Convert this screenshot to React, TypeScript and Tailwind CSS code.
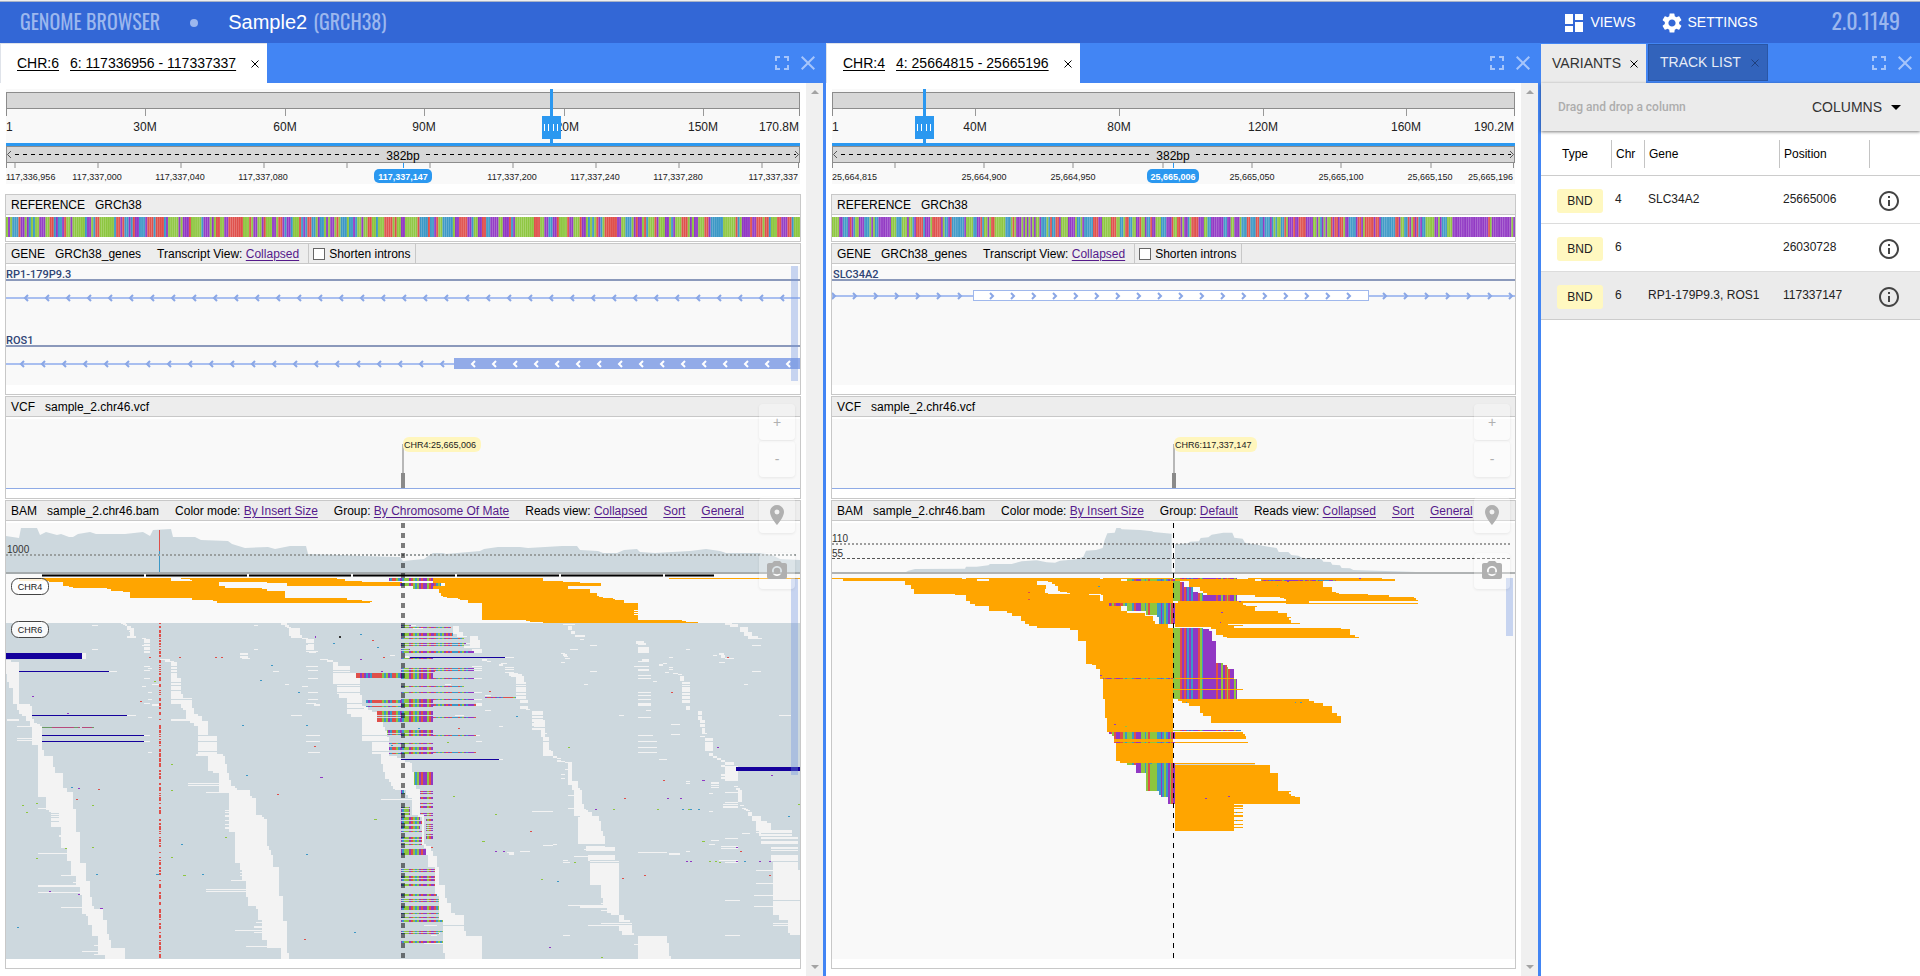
import React from "react";
import {
  MdArrowDropDown,
  MdCameraAlt,
  MdClose,
  MdDashboard,
  MdFullscreen,
  MdInfoOutline,
  MdPlace,
  MdSettings,
} from "react-icons/md";

const GREEN = "#8dc63f";
const RED = "#df4f4a";
const BLUE = "#3c98c6";
const PURPLE = "#9138c4";
const ORANGE = "#ffa500";
const NAVY = "#14009c";
const READ = "#cdd8de";
const GAP = "#f3f3f3";
const BASES: Record<string, string> = { g: GREEN, r: RED, b: BLUE, p: PURPLE };

/* ---------- geometry helpers ---------- */

type Frame = { x: number; w: number };
const LEFT: Frame = { x: 6, w: 794 };
const RIGHT: Frame = { x: 832, w: 683 };

const pct = (f: Frame, x: number) => `${((x - f.x) / f.w) * 100}%`;

function random(seed: number) {
  let s = seed;
  return () => {
    s = (s * 1664525 + 1013904223) % 4294967296;
    return s / 4294967296;
  };
}

const pairs = (s: string) =>
  s
    .trim()
    .split(/\s+/)
    .map((p) => p.split(",").map(Number));

/* A stepped band: each pair is an edge position and the row where it starts. */
function band(left: string, right: string, end: number) {
  const l = pairs(left);
  const r = pairs(right);
  let d = `M${l[0][0]} ${l[0][1]}`;
  r.forEach(([x, y]) => (d += `V${y}H${x}`));
  d += `V${end}H${l[l.length - 1][0]}`;
  for (let i = l.length - 1; i > 0; i--) d += `V${l[i][1]}H${l[i - 1][0]}`;
  return d + "Z";
}

const boxes = (s: string) =>
  pairs(s)
    .map(([x, y, w, h = 3]) => `M${x} ${y}h${w}v${h}h${-w}z`)
    .join("");

function Canvas({ frame, y, h, className, children, labels }: {
  frame: Frame; y: number; h: number; className: string;
  children: React.ReactNode; labels?: React.ReactNode;
}) {
  return (
    <svg className={`block w-full bg-[#f9f9f9] ${className}`}>
      <svg x="0" y="0" width="100%" height="100%" viewBox={`${frame.x} ${y} ${frame.w} ${h}`} preserveAspectRatio="none">
        {children}
      </svg>
      {labels}
    </svg>
  );
}

function Stripes({ id, start, code }: { id: string; start: number; code: string }) {
  const parts = code.split(" ").map((c) => [c[0], Number(c.slice(1))] as [string, number]);
  const total = parts.reduce((a, p) => a + p[1], 0);
  let x = 0;
  return (
    <pattern id={id} patternUnits="userSpaceOnUse" x={start} y="-400" width={total} height="3000">
      {parts.map(([c, w], i) => {
        const at = x;
        x += w;
        return <rect key={i} x={at} y="0" width={w} height="3000" fill={BASES[c]} />;
      })}
    </pattern>
  );
}

/* ---------- ruler ---------- */

type RulerData = {
  frame: Frame; handle: number; center: number;
  major: [number, string][]; end: string;
  minor: number[]; minorLabels: [number, string][];
  first: string; last: string; current: string; pill: number;
};

const LEFT_RULER: RulerData = {
  frame: LEFT, handle: 551, center: 403,
  major: [[145, "30M"], [285, "60M"], [424, "90M"], [564, "120M"], [703, "150M"]],
  end: "170.8M",
  minor: [15, 98, 181, 264, 347, 430, 513, 596, 679, 762],
  minorLabels: [[97, "117,337,000"], [180, "117,337,040"], [263, "117,337,080"], [512, "117,337,200"], [595, "117,337,240"], [678, "117,337,280"]],
  first: "117,336,956", last: "117,337,337", current: "117,337,147", pill: 58,
};

const RIGHT_RULER: RulerData = {
  frame: RIGHT, handle: 924, center: 1173,
  major: [[975, "40M"], [1119, "80M"], [1263, "120M"], [1406, "160M"]],
  end: "190.2M",
  minor: [895, 984, 1073, 1163, 1252, 1341, 1431],
  minorLabels: [[984, "25,664,900"], [1073, "25,664,950"], [1252, "25,665,050"], [1341, "25,665,100"], [1430, "25,665,150"]],
  first: "25,664,815", last: "25,665,196", current: "25,665,006", pill: 52,
};

function Ruler({ data }: { data: RulerData }) {
  const { frame: f } = data;
  const a = f.x;
  const b = f.x + f.w;
  const p = (x: number) => pct(f, x);
  return (
    <Canvas
      frame={f} y={89} h={95} className="h-[95px]"
      labels={
        <>
          <g fontSize="12" fill="#222">
            <text x="0" y="42">1</text>
            {data.major.map(([x, t]) => <text key={t} x={p(x)} y="42" textAnchor="middle">{t}</text>)}
            <text x={p(b - 1)} y="42" textAnchor="end">{data.end}</text>
          </g>
          <text x={p(data.center)} y="71" textAnchor="middle" fontSize="12" fill="#000">382bp</text>
          <g fontSize="9" fill="#222">
            <text x="0" y="91">{data.first}</text>
            {data.minorLabels.map(([x, t]) => <text key={t} x={p(x)} y="91" textAnchor="middle">{t}</text>)}
            <text x={p(b - 2)} y="91" textAnchor="end">{data.last}</text>
          </g>
          <svg x={p(data.center)} y="0" overflow="visible">
            <rect x={-data.pill / 2} y="80" width={data.pill} height="14" rx="5" fill="#2b98f0" />
            <text x="0" y="91" textAnchor="middle" fontSize="9" fontWeight="700" fill="#fff">{data.current}</text>
          </svg>
          <svg x={p(data.handle)} y="0" overflow="visible">
            <rect x="-1" y="0" width="3" height="54" fill="#2b98f0" />
            <rect x="-9" y="27" width="19" height="23" fill="#2b98f0" />
            {[-7, -3, 2, 6].map((x) => <rect key={x} x={x} y="35" width="1" height="7" fill="#fff" />)}
          </svg>
        </>
      }
    >
      <g shapeRendering="crispEdges">
        <rect x={a} y="92" width={f.w} height="17" fill="#8c8c8c" />
        <rect x={a + 1} y="93" width={f.w - 2} height="15" fill="#d7d7d7" />
        <rect x={a} y="109" width="1" height="7" fill="#8c8c8c" />
        <rect x={b - 1} y="109" width="1" height="7" fill="#8c8c8c" />
        {data.major.map(([x]) => <rect key={x} x={x} y="109" width="1" height="7" fill="#999" />)}
        <rect x={a} y="143" width={f.w} height="3" fill="#2b98f0" />
        <rect x={a} y="146" width={f.w} height="17" fill="#8c8c8c" />
        <rect x={a + 1} y="147" width={f.w - 2} height="15" fill="#d7d7d7" />
        <path d={`M${a + 9} 154.5H${data.center - 22}M${data.center + 23} 154.5H${b - 4}`} stroke="#000" strokeDasharray="4 4" />
        <rect x={a} y="163" width="1" height="5" fill="#8c8c8c" />
        <rect x={b - 2} y="163" width="1" height="5" fill="#8c8c8c" />
        {data.minor.map((x) => <rect key={x} x={x - 1} y="163" width="2" height="5" fill="#c4c4c4" />)}
        <rect x={data.center} y="163" width="1" height="5" fill="#2b98f0" />
      </g>
      <path d={`M${a + 5} 151L${a + 1.5} 154.5L${a + 5} 158M${b - 5} 151L${b - 1.5} 154.5L${b - 5} 158`} fill="none" stroke="#555" />
    </Canvas>
  );
}

/* ---------- reference sequence ---------- */

function Sequence({ frame, seed, runs }: { frame: Frame; seed: number; runs: [number, number][] }) {
  const rnd = random(seed);
  const n = 382;
  const step = frame.w / n;
  const keys = ["g", "g", "r", "b", "p", "p", "p", "g", "b", "r"];
  let cur = "g";
  const cells: React.ReactNode[] = [];
  for (let i = 0; i < n; i++) {
    if (rnd() > 0.3) cur = keys[Math.floor(rnd() * keys.length)];
    const purple = runs.some(([s, e]) => i >= s && i <= e);
    const c = purple ? "p" : cur;
    cells.push(<rect key={i} x={frame.x + i * step} y="217" width={step + 0.1} height="20" fill={BASES[c]} />);
  }
  return (
    <Canvas frame={frame} y={217} h={20} className="h-5">
      {cells}
      <path
        d={Array.from({ length: n }, (_, i) => `M${frame.x + (i + 0.85) * step} 217v20`).join("")}
        stroke="#fff" strokeOpacity="0.18" strokeWidth="0.6"
      />
    </Canvas>
  );
}

/* ---------- genes ---------- */

const chevrons = (from: number, to: number, y: number, dir: number) => {
  let d = "";
  for (let x = from; x <= to; x += 21) d += `M${x - dir * 2} ${y - 3}L${x + dir} ${y}L${x - dir * 2} ${y + 3}`;
  return d;
};

function LeftGenes() {
  return (
    <Canvas
      frame={LEFT} y={266} h={119} className="h-[119px]"
      labels={
        <g className="font-[Roboto,sans-serif]" fontSize="11" fontWeight="500" fill="#2f4475">
          <text x="0" y="12">RP1-179P9.3</text>
          <text x="0" y="78">ROS1</text>
        </g>
      }
    >
      <rect x="6" y="279" width="794" height="2" fill="#8b99bb" />
      <rect x="6" y="345" width="794" height="2" fill="#8b99bb" />
      <rect x="6" y="297" width="794" height="2" fill="#a9bff0" />
      <rect x="6" y="363" width="794" height="2" fill="#a9bff0" />
      <path d={chevrons(26, 790, 298, -1) + chevrons(22, 445, 364, -1)} fill="none" stroke="#8aa7e6" strokeWidth="2" />
      <rect x="454" y="358" width="346" height="11" fill="#92abe8" />
      <path d={chevrons(473, 795, 364, -1)} fill="none" stroke="#fff" strokeWidth="2" />
      <rect x="791" y="266" width="7" height="115" fill="#6f92e0" fillOpacity="0.36" />
    </Canvas>
  );
}

function RightGenes() {
  return (
    <Canvas
      frame={RIGHT} y={266} h={119} className="h-[119px]"
      labels={<text x="1" y="12" className="font-[Roboto,sans-serif]" fontSize="11" fontWeight="500" fill="#2f4475">SLC34A2</text>}
    >
      <rect x="832" y="279" width="683" height="2" fill="#8b99bb" />
      <rect x="832" y="295" width="683" height="2" fill="#a9bff0" />
      <path d={chevrons(834, 970, 296, 1) + chevrons(1385, 1515, 296, 1)} fill="none" stroke="#8aa7e6" strokeWidth="2" />
      <rect x="973.5" y="290.5" width="395" height="10" fill="#fff" stroke="#a0b8ec" />
      <path d={chevrons(992, 1355, 296, 1)} fill="none" stroke="#8aa7e6" strokeWidth="2" />
    </Canvas>
  );
}

/* ---------- variants ---------- */

function Vcf({ frame, at, label, width }: { frame: Frame; at: number; label: string; width: number }) {
  return (
    <Canvas
      frame={frame} y={419} h={70} className="h-[70px]"
      labels={
        <svg x={pct(frame, at)} y="0" overflow="visible">
          <rect x="0" y="25" width="2" height="40" fill="#b8b8b8" />
          <rect x="-1" y="54" width="4" height="15" fill="#8a8a8a" />
          <rect x="1" y="18" width={width} height="15" rx="6" fill="#fff6bd" />
          <text x="2" y="29" fontSize="9" fill="#222">{label}</text>
        </svg>
      }
    >
      <rect x={frame.x} y="488" width={frame.w} height="1" fill="#8fabe6" />
    </Canvas>
  );
}

/* ---------- alignments, chromosome 6 ---------- */

const COVERAGE_LEFT =
  "M6 572V536L19 538L21 528L37 528L40 535L46 532L57 535L61 534L69 537L73 537L78 534L90 532L96 534L125 534L143 532L150 536L153 530L171 529L173 537L195 537L201 540L228 541L232 544L245 548L268 547L275 549L290 546L306 546L308 554L340 555L362 556L400 557L403 561L424 559L428 556L433 553L443 553L446 554L480 551L484 549L498 547L520 547L528 548L562 546L577 546L580 550L598 551L603 553L617 553L624 550L637 549L640 552L655 553L690 551L706 549L720 551L726 553L760 553L772 555L780 559L800 560V572Z";

const A_BANDS = [
  band(
    "18,330 21,372 27,396 39,414 51,462 57,480 66,492 78,498 90,513 96,528 114,585 138,741 147,780 153,786 183,831 201,894 213,933 228,978 240,1010 246,1035 258,1092 264,1098 276,1125 294,1158 315,1212",
    "33,330 57,336 90,462 96,468 102,507 111,519 120,522 126,528 132,600 159,618 165,651 189,669 201,714 219,726 228,777 240,846 258,939 270,993 276,1041 282,1068 309,1076 321,1110 327,1152 333,1170 375,1194",
    1227,
  ),
  band(
    "480,327 495,330 513,336 543,462 549,474 558,480 570,513 582,519 594,528 624,618 639,663 657,669 687,726 705,846 720,939 726,960 738,993 744,1041 768,1068 774,1077 786,1110 801,1170 843,1194",
    "510,327 522,333 531,336 543,385 549,432 576,444 582,474 594,492 606,498 624,513 651,558 669,612 675,618 681,642 687,669 693,690 705,708 711,714 750,720 756,738 768,744 786,795 792,801 801,807 807,888 813,900 819,915 837,951 849,1038 861,1113 867,1209",
    1227,
  ),
  band(
    "999,336 1011,402 1017,432 1041,444 1053,492 1086,502 1116,573 1143,612",
    "1014,336 1050,348 1080,369 1086,435 1104,468 1116,480 1131,486 1149,516 1155,531 1161,543 1167,561",
    618,
  ),
].join("");

const A_GAPS = boxes(
  "363,219,15 369,222,12 375,225,6 381,228,12,9 390,234,12,30 381,237,9 387,243,6 381,258,27,6 426,264,12 432,267,18,12 426,285,24 432,282,18 432,291,18,9 432,303,18,6 " +
    "843,219,18,6 855,225,12,3 855,228,12 861,231,12 867,234,33,24 873,255,33,9 906,264,18 918,267,24,12 924,282,18 918,285,24,15 918,303,36,3 926,306,22,3 960,327,24 981,330,18,6 " +
    "246,309,12,18 327,363,24 381,495,27 432,555,18 432,573,18 276,225,18 276,297,18 762,225,12 762,297,12 720,309,24,6 720,318,24,6 726,324,24 738,312,6 " +
    "432,348,18 444,354,12 432,360,18 432,384,18 426,408,12 444,426,12 444,447,12 432,459,18 456,462,24,6 444,501,12 456,402,24 444,606,12 820,363,17 855,402,12 906,408,18 873,495,33 " +
    "918,348,36 924,360,30 924,384,30 924,426,30 924,447,30 918,459,30 942,462,18,6 918,555,42 918,573,42 924,606,36 21,507,36,6 51,528,45 51,564,45 51,570,45 114,774,39 114,909,87 183,975,45 " +
    "114,1005,126,6 114,1026,132 183,1071,63 219,996,18 246,1203,54 282,1185,12 282,1212,36 153,792,24 153,798,24 177,855,12,6 564,699,93 564,705,93 618,726,69 675,780,20,3 675,786,20 675,795,20,6 675,810,20 675,822,20 675,831,30,6 513,507,60,6 " +
    "693,990,45 618,1017,126 618,1023,126 768,1116,30 762,1128,30,6 705,1140,81 762,1146,30 738,1188,66 588,612,36,6 624,651,12 561,498,45 720,954,9 720,966,9 720,975,9 1143,747,93 1170,315,15 1218,225,30 1215,318,12,9",
);

const A_LINES = boxes(
  "513,348,18 513,357,18 513,366,18 513,396,30 513,405,30 513,420,30 513,447,63 594,555,30 594,573,57 594,603,57 999,360,51 999,366,51 1011,402,69 1011,408,69 1011,426,75 1041,459,50 1041,474,50 1086,555,81 1116,573,51 1116,603,51 153,789,24 153,795,24 153,801,24 153,813,24",
);

const A_READS = "M57 84H513V93H618V96H657V108H675V113H786V117H801V123H855V144H1041V150H1086V153H1116V156H1110V159H651V153H639V150H576V144H390V126H369V123H333V117H321V114H219V111H207V107H189V96H148V93H57ZM543 84H1010V87H1035V93H1086V96H1205V108H861V99H801V96H618V93H576V90H570V87H543Z";

const B_READS =
  band(
    "99,594 117,627 123,639 129,648 141,651 174,654 180,657 204,660 246,669 378,720 390,723 429,726",
    "429,594 489,603 540,606 603,609 504,618 570,627 591,639 597,648 610,651 639,654 645,657 672,660 714,669 846,720 858,723 893,726",
    729,
  ) + boxes("807,594,393");

const C_BANDS = [
  band(
    "3,348 9,372 15,396 27,417 33,426 39,438 45,447 78,450 84,465 96,474 114,525 126,531 132,615 138,624 144,645 165,681 177,768 189,845 195,939",
    "51,348 63,354 75,360 90,366 96,369 102,396 108,435 120,447 132,525 138,612 153,618 159,633 171,648 177,681 195,735 201,774 213,789 225,819 252,825 258,873 306,888",
    957,
  ),
  band("387,99 393,108 408,111", "414,99 426,102 432,108 438,126", 177),
  band("456,213 483,270 489,291", "489,213 495,240 507,291 513,330 519,333", 348),
  band("555,366 564,369 576,435 582,450 594,528", "576,366 594,423 600,444 606,450 612,492 618,507 624,510 636,516 657,528 663,543 669,573 675,588", 612),
  band("624,645 630,663 663,735 669,774 681,795 693,819 717,825 726,873", "705,645 717,663 732,825 750,840 756,846 762,879", 885),
  band("774,888", "861,888 867,909 873,948", 957),
  band("1035,366 1035,378", "1062,366 1074,378", 423),
  band("1116,528 1128,543 1137,579 1143,591", "1143,528 1161,543 1173,549 1236,570 1254,591", 612),
  band("1173,645 1179,663 1197,825 1224,840 1230,879", "1254,645 1260,690", 885),
].join("");

const C_GAPS = boxes(
  "270,-12,24,12 270,0,30,24 258,9,30 252,18,30,6 276,27,30,12 99,-40,30,6 219,-42,18,24 231,-24,18,15 246,-12,15 306,57,15,6 321,63,12 357,72,12,6 363,69,18 375,81,27 375,87,27 375,96,27 276,78,30 282,84,24 282,90,24 282,114,24 282,156,24 282,177,24 288,189,18,9 288,303,18 " +
    "375,51,27 357,357,12 315,165,18 315,210,18 414,168,24,9 420,180,24,9 420,198,24,9 438,207,12 483,279,18 483,288,12 519,348,12,6 531,354,12 531,360,12,6 543,363,12 195,132,18 225,225,27 357,258,12 288,285,12 " +
    "549,-48,36 564,-42,12,12 573,-27,12,9 585,-15,30,6 600,-3,12 768,3,24,9 774,9,24,6 774,21,33,18 786,57,21,9 774,63,30 762,78,12 774,79,33 774,88,33,6 774,105,39 774,114,39 774,156,39 774,165,39 774,177,39 774,189,39,9 798,210,15 774,231,39 774,285,45 774,303,57 774,321,57 774,336,57 837,357,24 " +
    "543,39,12 549,43,12,5 552,48,12 555,54,15 543,66,12 570,27,24 630,15,21 630,93,21 612,132,12 717,225,15 873,252,27 873,282,27 543,402,12 543,414,12 555,387,12 564,465,18 564,504,18 456,513,63 519,612,12 489,615,30 612,627,12 618,618,57,3 618,621,87,12 582,648,45 420,633,30 381,636,21 387,639,15,6 549,660,15 549,666,21 " +
    "564,795,120 600,798,84,6 663,789,20 663,810,20 663,849,54 624,855,93 549,885,21 762,912,12 132,855,39 132,909,57 153,885,18 153,879,27 774,636,87 867,639,33,6 918,633,12 987,513,12 987,459,12 993,600,24 987,612,12 1035,594,39 1023,618,51 1023,624,51 1017,660,57 1035,666,39 993,612,12 1086,579,24 " +
    "1035,780,45 1128,690,51 1128,729,51 1122,765,57 1122,798,57 1179,849,45 1179,855,45 1035,885,45 918,423,12 918,429,12 993,426,24,6 993,434,24 993,441,24 1029,492,45 1029,498,45,6 1035,456,39 1035,486,39 1023,375,12,6 1023,402,12,6 1023,411,12,6 1062,438,12 1068,444,12,6 1074,450,12,36 1080,495,12 1086,504,12 1092,507,12 1098,510,12 1104,516,12,12 " +
    "837,72,12,6 849,69,12 867,81,12 867,87,12 855,96,12 879,99,15 894,102,12 900,108,12,15 906,126,24,63 912,180,18,9 918,198,12,12 867,51,12 819,123,12 918,27,12 1017,39,15,5 1023,45,12,9 1035,54,27 1017,66,18 999,45,12 1116,15,27 1116,93,27 1092,132,12 1197,225,36 954,213,12,27 960,240,15,24 966,264,9,15 966,279,15 960,288,15 975,293,24,39 987,330,12,3 987,339,12,9 999,348,12,6 1011,354,12,6 1023,360,12,6 " +
    "1035,-51,20,6 1051,-48,24,9 1080,-39,24,15 1092,-24,24,12 1104,-12,30,8 1116,-6,30,3 1173,621,81,12",
);

const C_LINES = boxes(
  "408,132,30 408,138,30 408,156,30 408,165,30 456,225,33 456,234,33 456,246,6 456,258,6 456,261,39 489,303,18 906,132,24 906,138,24 906,156,24 906,165,24 906,177,24 954,225,12 960,249,15 960,261,15 975,303,24 1035,375,39 1128,573,8,3 1143,579,93 1137,588,110 1143,597,111,3 1143,600,111 1173,627,81 1179,663,75 1179,780,81 630,660,87 630,666,87 189,855,63 717,846,39 717,852,39 594,528,6 132,561,6 120,561,6",
);

const C_MISMATCH = boxes(
  "63,-45,30 63,-39,150 63,-21,156,9 63,-6,189 63,9,195 63,15,189 63,27,27 63,33,219,6 63,54,96 63,84,219 63,90,102,6 165,90,117 -72,99,231,15 63,114,219 63,138,189 63,156,219 63,177,219 -42,180,201,9 63,192,225,6 -42,198,201 -9,213,168,12 -9,228,168 -9,234,168,12 63,231,225 21,270,138,9 21,282,138 63,285,225 27,309,132 27,321,132,9 63,336,225 27,339,132 " +
    "102,396,57,39 120,453,39 120,459,39 120,471,39,6 120,489,39 120,498,39,6 120,519,39 132,525,27 138,537,21,6 138,552,21 138,558,21 138,564,21 138,570,21 138,582,21 138,588,21,9 63,450,9,9 63,459,12 63,501,27 63,507,27,9 63,519,27,6 63,531,57,9 63,543,63,9 63,558,57,9 63,573,63 63,591,63,6 63,600,63,6 63,612,63 63,627,75,18 " +
    "63,687,102 63,693,102 63,708,102,6 63,717,102,6 63,732,102,6 63,762,108,6 63,777,114 63,783,114 63,798,114,12 63,819,114 63,831,114 63,840,126,6 63,873,126 63,879,114 63,903,126,6 315,171,93",
);

const SPECKS: Record<string, string> = {
  [RED]: boxes("-693,51,6 -603,51,6 -495,51,6 -477,51,6 -24,0,6 9,51,6 -720,183,6 327,153,6 234,264,6 -198,318,6 873,156,6 1041,51,6 849,420,6 732,474,6 -912,477,6 -846,447,6 450,573,6 -309,462,6 726,714,6 792,705,6 1080,633,6 1167,705,6 -228,897,6 153,621,6"),
  [GREEN]: boxes("-678,123,6 564,321,6 201,306,6 -627,372,6 219,468,6 -627,450,6 345,522,6 306,603,9 699,507,6 831,507,6 924,507,6 966,603,9 582,666,6 483,717,6 663,951,6 987,663,6 1005,663,6 1017,666,6 1254,492,6 -1074,495,6 -1062,516,6 -1032,489,6 -864,495,6 -864,621,6 -945,624,6 -1032,654,6 -18,537,9 -465,591,6 -591,705,9 -627,651,6"),
  [BLUE]: boxes("-60,-18,6 -9,21,6 -141,9,6 -327,75,6 -360,120,6 -246,156,6 -414,255,6 -222,255,6 408,228,6 114,264,6 33,315,6 -402,405,6 -927,441,6 906,507,6 930,507,6 954,507,6 1224,528,6 531,723,6 1092,663,6 -1089,861,6 -78,876,6 -852,702,6 -597,612,6 -672,702,9 -534,702,6 -222,642,6"),
  [PURPLE]: boxes("-195,-12,3,6 -60,57,6 3,93,6 -1044,168,6 -939,219,6 1011,321,6 966,420,9 1173,405,6 -180,411,9 -906,444,6 645,507,6 861,474,6 900,474,6 345,633,6 369,633,6 918,663,6 930,663,6 1068,621,6 1068,663,6 1137,663,6 1167,663,6 507,921,6 -993,753,6 -906,762,6 -840,804,9"),
};

function redSnps() {
  const rnd = random(17);
  let d = "";
  let y = 219;
  while (y < 1224) {
    const run = 3 + 3 * Math.floor(rnd() * 4);
    d += `M477 ${y}h6v${run}h-6z`;
    y += run + 3 + 3 * Math.floor(rnd() * rnd() * 5);
  }
  return d;
}

const ZOOM_LINE = "M42 575.5H144M146 575.5H247M249 575.5H351M353 575.5H455M457 575.5H559M561 575.5H663M665 575.5H714";

function LeftBam() {
  const third = "scale(0.33333)";
  return (
    <Canvas
      frame={LEFT} y={523} h={436} className="h-[436px]"
      labels={
        <>
          <text x="1" y="30" fontSize="10" fill="#333">1000</text>
          {[["CHR4", 55], ["CHR6", 98]].map(([t, y]) => (
            <g key={t}>
              <rect x="5.5" y={Number(y) + 0.5} width="37" height="16" rx="7" fill="#fff" fillOpacity="0.85" stroke="#444" />
              <text x="24" y={Number(y) + 12} textAnchor="middle" fontSize="9" fill="#222">{t}</text>
            </g>
          ))}
        </>
      }
    >
      <defs>
        <Stripes
          id="mismatch-left" start={-72}
          code="r12 p6 r6 p6 b6 p6 b6 r18 r12 g6 b6 g6 p6 b6 r12 g6 b6 p6 b6 g15 p6 r6 g6 b6 g6 p6 r6 p12 g6 r6 p9 r6 b6 g6 b6 g6 p6 r6 p6 r6 b18 r6 b6 g6 p6 b6 p18 r6 g6 p27"
        />
      </defs>
      <path d={COVERAGE_LEFT} fill={READ} />
      <g shapeRendering="crispEdges">
        <rect x="159" y="530" width="1" height="21" fill={RED} />
        <rect x="159" y="551" width="1" height="21" fill={BLUE} />
        <path d="M6 555H796" stroke="#9a9f9f" strokeWidth="2" strokeDasharray="2 2" />
        <rect x="6" y="572" width="794" height="2" fill="#a5abad" />
        <path d={ZOOM_LINE} stroke="#777" strokeWidth="3" />
        <path d={ZOOM_LINE} stroke="#000" strokeWidth="1" />
        <rect x="6" y="623" width="794" height="336" fill={READ} />
        <g transform={`translate(0 550) ${third}`}>
          <path d={A_READS} fill={ORANGE} />
          <path d={A_BANDS + A_GAPS} fill={GAP} />
          <path d={A_LINES} fill={READ} />
          <path d={boxes("18,309,228,18 57,363,270 96,495,285 126,555,306 126,573,306")} fill={NAVY} />
          <path d={boxes("126,531,30 222,531,12 276,531,6")} fill="#6a9a62" />
          <path d={boxes("156,531,66 234,531,6 246,531,30")} fill="#b74a7c" />
          <path d={redSnps()} fill={RED} />
          <rect x="1017" y="258" width="6" height="6" fill="#333" />
        </g>
        <g transform={`translate(400 380) ${third}`}>
          <path d={B_READS} fill={ORANGE} />
          <path d={boxes("702,690,12 702,696,12 702,702,12")} fill="#fff" />
        </g>
        <g transform={`translate(380 640) ${third}`}>
          <path d={C_BANDS + C_GAPS} fill={GAP} />
          <path d={C_LINES} fill={READ} />
          <path d={boxes("27,-186,132,9 60,-171,123,9 100,-162,59,9")} fill="url(#mismatch-left)" />
          <path d={boxes("183,-171,12,9 120,-174,12,3")} fill="#f9f9f9" />
          <path d={C_MISMATCH} fill="url(#mismatch-left)" />
          <path d={boxes("90,51,285 63,357,294 1068,381,192,12")} fill={NAVY} />
          {Object.keys(SPECKS).map((c) => <path key={c} d={SPECKS[c]} fill={c} />)}
        </g>
        <path d="M403 523V959" stroke="#000" strokeOpacity="0.5" strokeWidth="4" strokeDasharray="5 5" />
        <rect x="791" y="578" width="7" height="197" fill="#6f92e0" fillOpacity="0.36" />
      </g>
    </Canvas>
  );
}

/* ---------- alignments, chromosome 4 ---------- */

const COVERAGE_RIGHT =
  "M-522 246L-515 242L-495 237L-345 236L-342 230L-310 230L-275 226L-270 222L-205 222L-175 214L-130 211L-100 217L-75 218L-60 212L-10 208L10 200L18 182L48 180L68 174L74 150L82 130L104 128L109 114L121 114L125 118L180 120L216 124L220 126L275 131V246ZM285 246V163L325 160L330 155L357 154L362 144L385 142L395 134L430 128L457 128L463 143L488 146L495 158L520 162L565 170L590 174L596 186L625 186L634 195L655 197L665 203L725 208L730 215L752 216L757 224L780 226L785 234L810 235L820 240L940 244L1008 246Z";

const D_LEFT = band(
  "-744,264 -711,267 -525,273 -507,285 -498,297 -375,312 -342,315 -330,333 -315,342 -273,348 -219,363 -204,369 -177,378 -165,393 -153,402 -129,408 -30,414 -6,420 18,453 36,522 48,525 60,537 69,567 75,627 81,684",
  "279,264",
  726,
);

const D_RIGHT = [
  boxes("285,267,240,6 504,264,402,3 543,267,402,6 294,333,393,6 618,339,396,3 444,405,45,3 102,747,177,9 108,759,171,54 120,813,159,6 66,564,396,3 264,597,225,3 285,756,219,3 285,819,240,3"),
  band("327,273 360,291 370,303 381,309 525,315 600,321 612,324 618,327", "729,273 756,291 768,306 777,309 864,312 927,315 1002,321 1008,324 1014,330", 333),
  band("285,339", "490,339 498,345 531,348 525,351 594,363 621,369 633,381 627,384 633,390 660,399 444,402", 408),
  band("285,408 393,412 409,417 429,435 441,441", "462,408 783,414 810,417 825,435 837,441", 444),
  band("294,627 306,633 327,639 360,648 369,669 393,678", "687,627 702,633 729,639 756,648 771,669 783,678", 699),
  band("285,726", "489,726 495,732 498,738", 747),
  band("285,825", "570,825 594,849 633,903 627,906 633,912 645,918 660,921 462,942", 1023),
  boxes("462,945,27,6 462,954,27,3 462,966,27,3 462,975,27,6 462,990,27,3 462,1002,27,3 462,1011,27,3"),
].join("");

const D_STRIPES_LEFT = [
  boxes("141,267,144,6 69,564,213,3 102,756,183,3"),
  band("87,339 141,348 198,363 231,375 237,381", "285,339", 402),
  band("87,726 96,732 102,738", "285,726", 747),
  band("141,819 168,825 198,849 237,903 243,915 264,921", "285,819", 942),
].join("");

const D_STRIPES_RIGHT = [
  boxes("285,264,186,3 543,270,225,3 280,720,204,3"),
  band("280,273", "300,273 312,276 339,291 354,306 369,309 471,315", 333),
  band("280,414", "369,414 387,417 396,423 408,453 429,519 441,525 444,531 462,537 471,567", 627),
].join("");

function RightBam() {
  return (
    <Canvas
      frame={RIGHT} y={523} h={436} className="h-[436px]"
      labels={
        <g fontSize="10" fill="#333">
          <text x="0" y="19">110</text>
          <text x="0" y="34">55</text>
        </g>
      }
    >
      <defs>
        <Stripes
          id="mismatch-a" start={87}
          code="p6 r3 g6 r6 p12 r9 g6 b6 g15 b6 r6 p15 g12 b3 g6 r6 g21 b12 p3 b6 g6 b6 p6 g3 r6 p6"
        />
        <Stripes
          id="mismatch-b" start={279}
          code="g21 r6 p6 r6 p3 b6 p6 b6 p15 r6 g6 b3 p39 r6 p9 g6 p6 r6 g3 r6 p12 g6 p3 b12 r3 b15 p12 g6 r6"
        />
      </defs>
      <g transform="translate(1080 490) scale(0.33333)">
        <path d={COVERAGE_RIGHT} fill={READ} />
        <g shapeRendering="crispEdges">
          <path d="M-744 161H1290" stroke="#777" strokeOpacity="0.7" strokeWidth="6" strokeDasharray="6 6" />
          <path d="M-744 205H1290" stroke="#555" strokeWidth="3" strokeDasharray="9 6" />
          <rect x="-744" y="246" width="2049" height="6" fill="#b0b3b4" />
          <path d={D_LEFT + D_RIGHT} fill={ORANGE} />
          <path
            d={
              band("90,339 123,348 141,363 195,369 219,378 225,393 264,402", "285,339", 414) +
              boxes("-309,267,36,6 -354,264,12,3 123,267,18,6 60,264,9,3 27,312,35,3 60,315,9,18") +
              "M-129 273H-96V276H-84V282H-75V288H-66V302H-60V306H-40V309H-30V312H-96V309H-105V297H-102V285H-129Z"
            }
            fill="#f9f9f9"
          />
          <path d={D_STRIPES_LEFT} fill="url(#mismatch-a)" />
          <path d={D_STRIPES_RIGHT} fill="url(#mismatch-b)" />
          <path d={boxes("285,564,177,3 264,597,225,3")} fill={ORANGE} />
          <path d={boxes("285,822,240,3")} fill={READ} />
          <path d={boxes("837,264,6 621,273,6 423,366,6 420,396,3 60,555,6 102,702,6 375,924,6 444,918,6 477,333,6")} fill={PURPLE} />
          <path d={boxes("54,288,6 318,636,3 645,636,3 660,636,6 468,966,3 468,990,3 207,819,9")} fill={BLUE} />
          <path d={boxes("-156,306,6 -156,327,6")} fill={RED} />
          <path d={boxes("591,285,3 135,708,6")} fill={GREEN} />
          <path d="M280.5 99V1407" stroke="#000" strokeWidth="3" strokeDasharray="15 15" />
          <rect x="1278" y="264" width="21" height="174" fill="#6f92e0" fillOpacity="0.36" />
        </g>
      </g>
    </Canvas>
  );
}

/* ---------- page parts ---------- */

function Link({ children }: { children: React.ReactNode }) {
  return <a href="#" className="text-[#551a8b] underline underline-offset-2">{children}</a>;
}

function Track({ type, name, menu, pad, children }: {
  type: string; name: string; menu?: React.ReactNode; pad: string; children: React.ReactNode;
}) {
  return (
    <section className={`mb-px border border-[#c8c8c8] bg-white ${pad}`}>
      <header className="mb-[2px] flex h-5 items-center whitespace-nowrap border-b border-[#c8c8c8] bg-[#ededed] pl-[5px] text-[12px] text-black">
        <h3>{type}</h3>
        <span className="ml-[10px]">{name}</span>
        {menu}
      </header>
      {children}
    </section>
  );
}

function GeneMenu({ id }: { id: string }) {
  return (
    <>
      <span className="ml-4">Transcript View: <Link>Collapsed</Link></span>
      <label htmlFor={id} className="ml-[9px] flex h-full items-center gap-1 border-x border-[#c8c8c8] px-1">
        <input id={id} type="checkbox" className="size-3 appearance-none border border-[#666] bg-white" />
        Shorten introns
      </label>
    </>
  );
}

function BamMenu({ group }: { group: string }) {
  return (
    <nav className="ml-4 flex gap-4">
      <span>Color mode: <Link>By Insert Size</Link></span>
      <span>Group: <Link>{group}</Link></span>
      <span>Reads view: <Link>Collapsed</Link></span>
      <Link>Sort</Link>
      <Link>General</Link>
    </nav>
  );
}

function Hover({ label, children }: { label: string; children: React.ReactNode }) {
  return (
    <button aria-label={label} className="flex size-9 items-center justify-center rounded-sm bg-white/30 text-[14px] text-[#b0b0b0] shadow-[0_1px_3px_rgba(0,0,0,0.08)]">
      {children}
    </button>
  );
}

function WindowButtons() {
  return (
    <div className="ml-auto flex items-center gap-[2px] pr-[3px] text-[#a6c5fb]">
      <button aria-label="Maximise"><MdFullscreen size={24} /></button>
      <button aria-label="Close"><MdClose size={24} /></button>
    </div>
  );
}

function TabClose({ label, className = "text-black" }: { label: string; className?: string }) {
  return (
    <button aria-label={label} className={className}>
      <svg width="8" height="8" viewBox="0 0 8 8"><path d="M.5 .5L7.5 7.5M7.5 .5L.5 7.5" stroke="currentColor" fill="none" /></svg>
    </button>
  );
}

function BrowserPane({ chr, range, children }: { chr: string; range: string; children: React.ReactNode }) {
  return (
    <section className="flex min-w-0 flex-col bg-white">
      <div className="flex h-10 bg-[#4285f4]">
        <div className="flex items-center border-l border-t border-[#dfe3ea] bg-white pl-4 pr-2 text-[14px] text-black">
          <a href="#" className="underline underline-offset-2">{chr}</a>
          <a href="#" className="ml-[11px] whitespace-nowrap underline underline-offset-2">{range}</a>
          <span className="ml-[15px] flex"><TabClose label="Close tab" /></span>
        </div>
        <WindowButtons />
      </div>
      <div className="flex grow">
        <div className="relative min-w-0 grow px-[5px] pt-[6px]">
          {children}
          <div className="absolute right-[11px] top-[321px] flex flex-col">
            <Hover label="Zoom in">+</Hover>
            <span className="h-px" />
            <Hover label="Zoom out">-</Hover>
            <span className="h-5" />
            <Hover label="Go to position"><MdPlace size={24} /></Hover>
            <span className="h-5" />
            <Hover label="Take a picture"><MdCameraAlt size={24} /></Hover>
          </div>
        </div>
        <div className="flex w-[17px] shrink-0 flex-col items-center justify-between bg-[#f0f0f0] py-[7px] text-[#a3a3a3]">
          <svg width="8" height="4" viewBox="0 0 8 4"><path d="M0 4L4 0L8 4Z" fill="currentColor" /></svg>
          <svg width="8" height="4" viewBox="0 0 8 4"><path d="M0 0L4 4L8 0Z" fill="currentColor" /></svg>
        </div>
      </div>
    </section>
  );
}

const VARIANTS = [
  { type: "BND", chr: "4", gene: "SLC34A2", pos: "25665006" },
  { type: "BND", chr: "6", gene: "", pos: "26030728" },
  { type: "BND", chr: "6", gene: "RP1-179P9.3, ROS1", pos: "117337147", selected: true },
];

function Head({ children, first }: { children?: React.ReactNode; first?: boolean }) {
  return (
    <th className="p-0 text-left font-normal">
      <div className={`flex h-7 items-center ${first ? "pl-[21px]" : "border-l border-[#c4c4c4] pl-1"}`}>{children}</div>
    </th>
  );
}

function VariantsPane() {
  return (
    <section className="flex flex-col bg-white">
      <div className="flex h-10 bg-[#4285f4] text-[14px]">
        <div className="mt-px flex items-center gap-[9px] whitespace-nowrap bg-[#ebebeb] pl-[11px] pr-2 text-[#333]">
          VARIANTS <span className="flex"><TabClose label="Close variants" /></span>
        </div>
        <div className="mb-[2px] ml-[2px] mt-px flex items-center gap-[10px] whitespace-nowrap border border-[#2a56a5] bg-[#3263bb] pl-[11px] pr-2 text-[#e6ecf7]">
          TRACK LIST <span className="flex"><TabClose label="Close track list" className="text-[#1f3f7c]" /></span>
        </div>
        <WindowButtons />
      </div>
      <div className="relative flex h-12 items-center justify-between bg-[#ebebeb] pl-[17px] pr-3 shadow-[0_1px_3px_rgba(0,0,0,0.5)]">
        <span className="font-[Roboto,sans-serif] text-[12px] font-medium text-[#adadad]">Drag and drop a column</span>
        <button className="flex items-center gap-[2px] text-[14px] text-[#333]">
          COLUMNS <MdArrowDropDown size={24} className="text-black" />
        </button>
      </div>
      <table className="mt-[2px] w-full table-fixed border-collapse text-[12px] text-[#222]">
        <colgroup>
          <col className="w-[70px]" />
          <col className="w-[33px]" />
          <col className="w-[135px]" />
          <col className="w-[90px]" />
          <col />
        </colgroup>
        <thead className="text-black">
          <tr className="h-[42px] border-b border-[#ccc]">
            <Head first>Type</Head>
            <Head>Chr</Head>
            <Head>Gene</Head>
            <Head>Position</Head>
            <Head />
          </tr>
        </thead>
        <tbody>
          {VARIANTS.map((v) => (
            <tr key={v.pos} className={`h-12 border-b ${v.selected ? "border-[#ccc] bg-[#ebebeb]" : "border-[#dcdcdc]"}`}>
              <td className="p-0 pl-4 pt-1">
                <span className="flex h-6 w-[46px] items-center justify-center rounded-[3px] bg-[#fff8c0]">{v.type}</span>
              </td>
              <td className="p-0 pl-1">{v.chr}</td>
              <td className="whitespace-nowrap p-0 pl-1">{v.gene}</td>
              <td className="p-0 pl-1">{v.pos}</td>
              <td className="p-0 pl-2 pt-1">
                <button aria-label="Details" className="block text-[#444]"><MdInfoOutline size={24} /></button>
              </td>
            </tr>
          ))}
        </tbody>
      </table>
    </section>
  );
}

export default function App() {
  return (
    <div className="flex min-h-screen flex-col border-t border-[#eee] bg-white font-['Liberation_Sans',Arial,sans-serif]">
      <header className="flex h-[42px] items-center border-t border-[#a9b3c7] bg-[#3367d6] pb-1 pl-5 pr-5">
        <span className="font-['Oswald','Liberation_Sans_Narrow',sans-serif] text-[20px] text-[#9cb7ee]">GENOME BROWSER</span>
        <span className="ml-[30px] mt-1 size-2 rounded-full bg-[#9cb7ee]" />
        <h1 className="ml-[30px] mt-[3px] text-[20px] text-white">Sample2</h1>
        <span className="ml-[6px] font-['Oswald','Liberation_Sans_Narrow',sans-serif] text-[20px] text-[#9cb7ee]">(GRCH38)</span>
        <nav className="ml-auto mt-1 flex items-center gap-6 text-[14px] text-white">
          <button className="flex items-center gap-1"><MdDashboard size={24} />VIEWS</button>
          <button className="flex items-center gap-1"><MdSettings size={24} />SETTINGS</button>
        </nav>
        <span className="ml-[74px] font-['Oswald','Liberation_Sans_Narrow',sans-serif] text-[22px] text-[#9cb7ee]">2.0.1149</span>
      </header>
      <main className="grid grow grid-cols-[minmax(0,823fr)_minmax(0,712fr)_379px] gap-[3px] bg-[#4285f4]">
        <BrowserPane chr="CHR:6" range="6: 117336956 - 117337337">
          <div className="mb-[10px] px-px"><Ruler data={LEFT_RULER} /></div>
          <Track type="REFERENCE" name="GRCh38" pad="pb-1"><Sequence frame={LEFT} seed={7} runs={[]} /></Track>
          <Track type="GENE" name="GRCh38_genes" menu={<GeneMenu id="introns-6" />} pad="pb-[9px]"><LeftGenes /></Track>
          <Track type="VCF" name="sample_2.chr46.vcf" pad="pb-[9px]"><Vcf frame={LEFT} at={402} label="CHR4:25,665,006" width={78} /></Track>
          <Track type="BAM" name="sample_2.chr46.bam" menu={<BamMenu group="By Chromosome Of Mate" />} pad="pb-[9px]"><LeftBam /></Track>
        </BrowserPane>
        <BrowserPane chr="CHR:4" range="4: 25664815 - 25665196">
          <div className="mb-[10px] px-px"><Ruler data={RIGHT_RULER} /></div>
          <Track type="REFERENCE" name="GRCh38" pad="pb-1"><Sequence frame={RIGHT} seed={91} runs={[[347, 366]]} /></Track>
          <Track type="GENE" name="GRCh38_genes" menu={<GeneMenu id="introns-4" />} pad="pb-[9px]"><RightGenes /></Track>
          <Track type="VCF" name="sample_2.chr46.vcf" pad="pb-[9px]"><Vcf frame={RIGHT} at={1173} label="CHR6:117,337,147" width={83} /></Track>
          <Track type="BAM" name="sample_2.chr46.bam" menu={<BamMenu group="Default" />} pad="pb-[9px]"><RightBam /></Track>
        </BrowserPane>
        <VariantsPane />
      </main>
    </div>
  );
}
